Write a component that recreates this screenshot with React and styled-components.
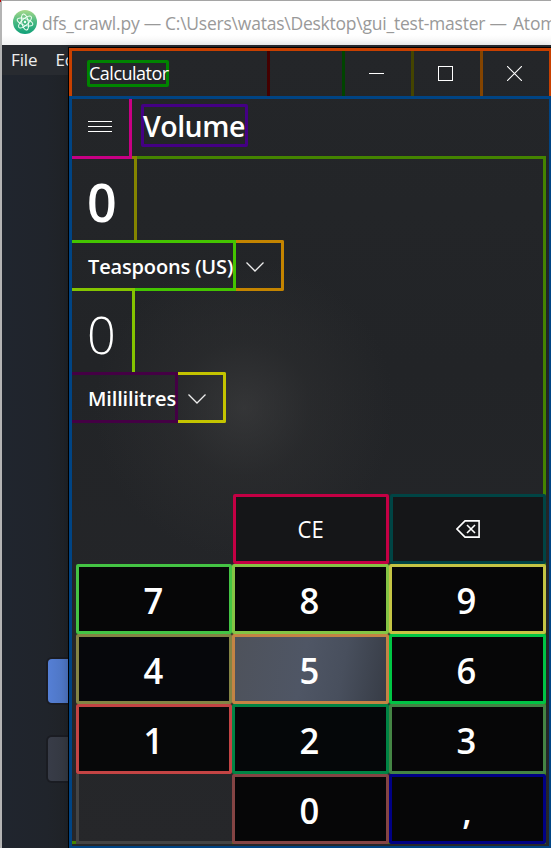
import React from "react";
import styled, { createGlobalStyle } from "styled-components";

const GlobalStyle = createGlobalStyle`
  * { box-sizing: border-box; }
  html, body { margin: 0; padding: 0; overflow: hidden; background: #20242c; }
  body { font-family: "Open Sans", "Noto Sans", sans-serif; color: #fff; }
`;

const Desktop = styled.div`
  position: relative;
  width: 551px;
  height: 848px;
  overflow: hidden;
`;

const EditorWindow = styled.div`
  height: 848px;
  border-top: 1px solid #a5a5a5;
  border-left: 2px solid #b4b4b4;
  background: linear-gradient(90deg, #20252e 0, #20242b 45px, #1f2226 67px);
  display: flex;
  flex-direction: column;
`;

const RedCorner = styled.i`
  position: absolute;
  left: 0;
  top: 0;
  width: 1px;
  height: 2px;
  background: #c00000;
`;

const EditorTitle = styled.header`
  height: 44px;
  flex: none;
  display: flex;
  align-items: center;
  padding-left: 11px;
  background: linear-gradient(#fff 34px, #f3f3f3);
  color: #999;
  font-size: 17.5px;
  white-space: pre;
  svg { flex: none; margin: -3px 5px 0 0; }
`;

const EditorName = styled.span`
  flex: none;
  line-height: 24px;
  letter-spacing: ${(p) => p.$track}px;
  width: ${(p) => p.$w}px;
`;

const EditorMenu = styled.nav`
  height: 30px;
  flex: none;
  display: flex;
  gap: 18px;
  padding-left: 9px;
  background: #282b30;
  font-size: 17px;
  line-height: 29px;
  letter-spacing: -0.1px;
  color: #eee;
`;

const EditorButtons = styled.div`
  margin-top: 584px;
  padding-left: 46px;
  display: flex;
  flex-direction: column;
  gap: 34px;
`;

const EditorButton = styled.div`
  height: 44px;
  border-radius: 4px 0 0 4px;
  background: ${(p) => p.$bg};
  box-shadow: 0 0 0 2px #1a1c22;
`;

const CalcWindow = styled.main`
  position: absolute;
  left: 68px;
  top: 47px;
  width: 484px;
  height: 802px;
  border-top: 1px solid #000;
  border-left: 1px solid #000;
  background:
    radial-gradient(ellipse 150px 150px at 175px 360px, rgba(74, 74, 74, 0.45), rgba(56, 56, 56, 0.28) 45%, transparent),
    linear-gradient(#242629, #222427 40%, #26272a);
  box-shadow: 0 0 8px rgba(0, 0, 0, 0.18);
`;

const TitleBar = styled.header`
  height: 48px;
  display: flex;
  border: 3px solid #c84000;
  border-bottom: 0;
`;

const TitleCell = styled.div`
  width: ${(p) => p.$w}px;
  border-right: ${(p) => (p.$line ? `3px solid ${p.$line}` : "0")};
  padding: ${(p) => p.$pad || "0"};
`;

const TitleLabel = styled.div`
  width: 82px;
  height: 27px;
  border: 3px solid #008400;
  border-radius: 2px;
  font-size: 18px;
  line-height: 21px;
  letter-spacing: -0.5px;
  text-indent: -1px;
  white-space: nowrap;
`;

const CaptionButton = styled.button`
  display: flex;
  align-items: flex-start;
  width: ${(p) => p.$w}px;
  padding: 15px 0 0 24px;
  border: 0;
  border-right: ${(p) => (p.$line ? `3px solid ${p.$line}` : "0")};
  background: none;
`;

const Body = styled.section`
  height: 753px;
  border: 3px solid #004484;
`;

const Header = styled.div`
  height: 57px;
  display: flex;
`;

const MenuButton = styled.button`
  position: relative;
  z-index: 2;
  display: flex;
  align-items: flex-start;
  width: 60px;
  height: 60px;
  padding: 22px 0 0 16px;
  border: 0 solid #c80084;
  border-width: 0 3px 3px 0;
  background: none;
`;

const Heading = styled.h1`
  width: 107px;
  height: 43px;
  margin: 5px 0 0 9px;
  border: 3px solid #440084;
  border-radius: 2px;
  font-size: 28.5px;
  font-weight: 600;
  line-height: 38px;
  letter-spacing: -0.5px;
  text-indent: -1px;
`;

const Converter = styled.div`
  width: 474px;
  height: 688px;
  border: 3px solid #448400;
  border-left: 0;
`;

const Value = styled.div`
  position: relative;
  width: ${(p) => p.$w}px;
  height: 84px;
  margin-top: -3px;
  padding-left: 15px;
  border: 0 solid ${(p) => p.$line};
  border-width: 3px 3px 0 0;
  font-size: 52px;
  font-weight: ${(p) => p.$weight};
  line-height: 86px;
  span { display: inline-block; transform: scaleX(${(p) => p.$sx}); transform-origin: left; }
`;

const UnitRow = styled.div`
  display: flex;
  height: 51px;
`;

const UnitName = styled.div`
  width: ${(p) => p.$w}px;
  padding-left: 16px;
  border: 3px solid ${(p) => p.$line};
  border-left: 0;
  font-size: 20px;
  font-weight: 600;
  line-height: 47px;
  letter-spacing: ${(p) => p.$track}px;
  white-space: nowrap;
`;

const UnitToggle = styled.button`
  display: flex;
  align-items: flex-start;
  width: 48px;
  padding: 18px 0 0 10px;
  border: 3px solid ${(p) => p.$line};
  border-left: 0;
  border-radius: 0 2px 2px 0;
  background: none;
`;

const Keypad = styled.div`
  display: grid;
  grid-template-columns: 156px 157px 157px;
  grid-auto-rows: 70px;
  margin: 71px 0 0 4px;
  width: 470px;
  position: relative;
`;

const Key = styled.button`
  display: flex;
  align-items: center;
  justify-content: center;
  padding: ${(p) => (p.$fn ? "0 1px 0 0" : "4px 2px 0 0")};
  margin-left: ${(p) => (p.$fn ? 1 : 0)}px;
  border: 3px solid ${(p) => p.$line};
  border-radius: 2px;
  background: ${(p) => p.$bg || "#060607"};
  color: #fff;
  font-family: inherit;
  font-size: ${(p) => (p.$fn ? 23 : 36)}px;
  font-weight: ${(p) => (p.$fn ? 400 : 600)};
  line-height: 1;
  span { display: inline-block; transform: scaleX(0.96); }
`;

const Blank = styled.div`
  visibility: ${(p) => (p.$line ? "visible" : "hidden")};
  border: 3px solid ${(p) => p.$line || "transparent"};
  border-top: 0;
  border-right: 0;
`;

const keys = [
  { t: "7", line: "#44c444" },
  { t: "8", line: "#84c444" },
  { t: "9", line: "#c4c444" },
  { t: "4", line: "#848444", bg: "#06070b" },
  { t: "5", line: "#c48444", bg: "linear-gradient(100deg, #4e525b, #4f5665 45%, #484f5d 70%, #373c46)" },
  { t: "6", line: "#00c444" },
  { t: "1", line: "#c44444", bg: "#070809" },
  { t: "2", line: "#008444", bg: "#050709" },
  { t: "3", line: "#448444" },
];

const Chevron = () => (
  <svg width="20" height="12" viewBox="0 0 20 12" fill="none" stroke="#eee" strokeWidth="1.3">
    <path d="M0.5 1.5 L9 10 L17.5 1.5" />
  </svg>
);

const AtomLogo = () => (
  <svg width="24" height="24" viewBox="0 0 24 24" fill="none" stroke="#f2fff6" strokeWidth="1">
    <defs>
      <linearGradient id="atom" x1="0" y1="0" x2="0" y2="1">
        <stop offset="0" stopColor="#a8d98a" />
        <stop offset="0.5" stopColor="#48b982" />
        <stop offset="1" stopColor="#10a078" />
      </linearGradient>
    </defs>
    <circle cx="12" cy="12" r="12" fill="url(#atom)" stroke="none" />
    <ellipse cx="12" cy="12" rx="3.3" ry="8.2" transform="rotate(-12 12 12)" />
    <ellipse cx="12" cy="12" rx="3.3" ry="8.2" transform="rotate(48 12 12)" />
    <ellipse cx="12" cy="12" rx="3.3" ry="8.2" transform="rotate(108 12 12)" />
    <circle cx="12" cy="12" r="1.2" fill="#f2fff6" stroke="none" />
  </svg>
);

export default function App() {
  return (
    <Desktop>
      <GlobalStyle />
      <EditorWindow>
        <EditorTitle>
          <AtomLogo />
          <EditorName $w={123} $track={-0.2}>dfs_crawl.py —</EditorName>
          <EditorName $w={348} $track={-0.23}>C:\Users\watas\Desktop\gui_test-master —</EditorName>
          <EditorName $w={60} $track={-0.2}>Atom</EditorName>
        </EditorTitle>
        <EditorMenu><span>File</span><span>Edit</span></EditorMenu>
        <EditorButtons>
          <EditorButton $bg="linear-gradient(90deg, #557fd5, #4b72bd 22px)" />
          <EditorButton $bg="linear-gradient(90deg, #383c48, #33373f 22px)" />
        </EditorButtons>
      </EditorWindow>
      <RedCorner />

      <CalcWindow>
        <TitleBar>
          <TitleCell $w={198} $line="#440000" $pad="9px 0 0 15px">
            <TitleLabel>Calculator</TitleLabel>
          </TitleCell>
          <TitleCell $w={75} $line="#004400" />
          <CaptionButton $w={69} $line="#444400" aria-label="Minimize">
            <svg width="15" height="15"><path d="M0 7.5H15" stroke="#fff" /></svg>
          </CaptionButton>
          <CaptionButton $w={69} $line="#844400" aria-label="Maximize">
            <svg width="15" height="15"><rect x=".5" y=".5" width="14" height="14" fill="none" stroke="#fff" /></svg>
          </CaptionButton>
          <CaptionButton $w={66} aria-label="Close">
            <svg width="15" height="15"><path d="M0 0L15 15M15 0L0 15" stroke="#fff" strokeWidth="1.1" /></svg>
          </CaptionButton>
        </TitleBar>
        <Body>
          <Header>
            <MenuButton aria-label="Menu">
              <svg width="24" height="11"><path d="M0 .5H24M0 5.5H24M0 10.5H24" stroke="#fff" /></svg>
            </MenuButton>
            <Heading>Volume</Heading>
          </Header>
          <Converter>
            <Value $w={65} $line="#848400" $weight={600} $sx={1}><span>0</span></Value>
            <UnitRow>
              <UnitName $w={164} $line="#44c400" $track={-0.15}>Teaspoons (US)</UnitName>
              <UnitToggle $line="#c48400" aria-label="Choose input unit"><Chevron /></UnitToggle>
            </UnitRow>
            <Value $w={63} $line="#84c400" $weight={300} $sx={0.97}><span>0</span></Value>
            <UnitRow>
              <UnitName $w={106} $line="#440044" $track={-0.15}>Millilitres</UnitName>
              <UnitToggle $line="#c4c400" aria-label="Choose output unit"><Chevron /></UnitToggle>
            </UnitRow>
            <Keypad>
              <Blank />
              <Key $fn $line="#c40044" $bg="#151618"><span>CE</span></Key>
              <Key $fn $line="#004444" $bg="#151618" aria-label="Backspace">
                <svg width="24" height="18" viewBox="0 0 24 18" fill="none" stroke="#fff" strokeWidth="1.6">
                  <path d="M9 .9H23.1V17.1H9L1 9Z M11 5L19 13M19 5L11 13" />
                </svg>
              </Key>
              {keys.map((k) => (
                <Key key={k.t} $line={k.line} $bg={k.bg}><span>{k.t}</span></Key>
              ))}
              <Blank $line="#444" />
              <Key $line="#844444"><span>0</span></Key>
              <Key $line="#000084"><span>,</span></Key>
            </Keypad>
          </Converter>
        </Body>
      </CalcWindow>
    </Desktop>
  );
}
